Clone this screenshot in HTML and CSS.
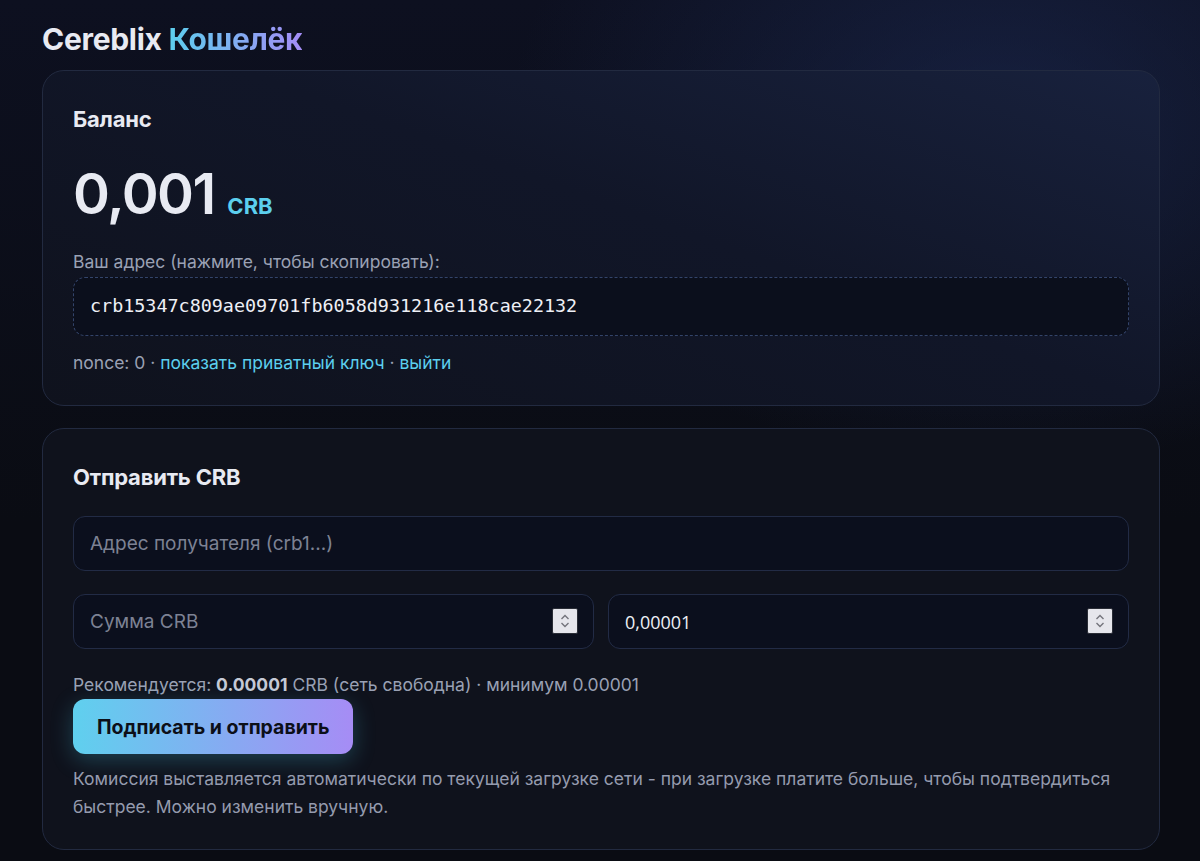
FILE: index.html
```html
<!DOCTYPE html>
<html lang="ru">
<head>
  <meta charset="UTF-8">
  <meta name="viewport" content="width=device-width, initial-scale=1">
  <title>Cereblix Кошелёк</title>
  <link rel="stylesheet" href="styles.css">
</head>
<body>

<main class="wrap">
  <h1 class="logo">Cereblix <span class="grad">Кошелёк</span></h1>

  <!-- Balance -->
  <section class="card card-balance">
    <h2>Баланс</h2>
    <div class="balance">0,001 <span class="unit">CRB</span></div>
    <div class="label">Ваш адрес (нажмите, чтобы скопировать):</div>
    <div class="address">crb15347c809ae09701fb6058d931216e118cae22132</div>
    <div class="meta">nonce: 0 · <a href="#">показать приватный ключ</a> · <a href="#">выйти</a></div>
  </section>

  <!-- Send -->
  <section class="card card-send">
    <h2>Отправить CRB</h2>
    <form class="send" onsubmit="return false;">
      <input type="text" placeholder="Адрес получателя (crb1...)">
      <div class="row">
        <label class="num">
          <input type="text" inputmode="decimal" placeholder="Сумма CRB">
          <span class="spin"><svg width="12" height="18" viewBox="0 0 12 18"><path d="M2.5 7 L6 3.5 L9.5 7 M2.5 11 L6 14.5 L9.5 11" fill="none" stroke="#74747c" stroke-width="1.4"/></svg></span>
        </label>
        <label class="num">
          <input type="text" inputmode="decimal" class="fee" value="0,00001">
          <span class="spin"><svg width="12" height="18" viewBox="0 0 12 18"><path d="M2.5 7 L6 3.5 L9.5 7 M2.5 11 L6 14.5 L9.5 11" fill="none" stroke="#74747c" stroke-width="1.4"/></svg></span>
        </label>
      </div>
      <p class="hint">Рекомендуется: <b>0.00001</b> CRB (сеть свободна) · минимум 0.00001</p>
      <button type="submit">Подписать и отправить</button>
      <p class="note">Комиссия выставляется автоматически по текущей загрузке сети - при загрузке платите больше, чтобы подтвердиться быстрее. Можно изменить вручную.</p>
    </form>
  </section>
</main>

</body>
</html>
```

FILE: styles.css
```css
html { background: #0a0c13; }
body {
  margin: 0;
  min-height: 861px;
  font-family: Inter, "Noto Sans", sans-serif;
  color: #e8eaf2;
  background:
    radial-gradient(ellipse 700px 500px at 1000px 120px, rgba(30, 45, 90, 0.55), transparent 70%),
    linear-gradient(180deg, #0d1020 0%, #0a0c13 60%);
}
.wrap { width: 1118px; margin: 0 auto 0 42px; padding-top: 21px; }
.logo { margin: 0 0 13px; font-size: 30px; font-weight: 700; letter-spacing: -0.3px; line-height: 36px; }
.grad {
  background: linear-gradient(90deg, #5ccfee, #a48cf6);
  -webkit-background-clip: text; background-clip: text; color: transparent;
}

.card {
  border: 1px solid #222a40;
  border-radius: 22px;
  padding: 34px 30px 32px;
  margin-bottom: 22px;
  background: #0f121c;
}
.card-balance {
  background: linear-gradient(200deg, #18213d 0%, #111628 45%, #0f121d 100%);
  padding-bottom: 31px;
}
.card-send { padding-bottom: 28px; }
.card h2 { margin: 0; font-size: 22px; font-weight: 700; line-height: 28px; letter-spacing: -0.2px; }

.balance { margin-top: 29px; font-size: 56px; font-weight: 600; line-height: 64px; letter-spacing: -1.5px; }
.unit { font-size: 22px; font-weight: 700; color: #5ccfee; letter-spacing: 0; }
.label { margin-top: 13px; font-size: 17.5px; color: #9aa1b4; line-height: 22px; }
.address {
  margin-top: 4px;
  padding: 17px 16px 18px;
  border: 1px dashed #33446a;
  border-radius: 12px;
  background: #0b0f1c;
  font-family: "DejaVu Sans Mono", "Liberation Mono", monospace;
  font-size: 18.4px; line-height: 22px; color: #eef0f6;
}
.meta { margin-top: 16px; font-size: 17.5px; color: #9aa1b4; line-height: 22px; }
.meta a { color: #5ccfee; text-decoration: none; }

.send { margin-top: 25px; display: flex; flex-direction: column; align-items: flex-start; }
.send input {
  box-sizing: border-box; width: 100%; height: 55px;
  padding: 0 16px;
  border: 1px solid #222b45; border-radius: 12px;
  background: #0b0f1d; color: #eef0f6;
  font-family: Inter, "Noto Sans", sans-serif; font-size: 19px;
  outline: none;
}
.send input::placeholder { color: #7d8294; }
.send .fee { font-family: "Open Sans", sans-serif; font-size: 18px; }
.row { display: flex; gap: 14px; width: 100%; margin-top: 23px; }
.num { position: relative; flex: 1; display: block; }
.spin {
  position: absolute; right: 16px; top: 14px;
  width: 26px; height: 26px; box-sizing: border-box;
  border: 1px solid #2a2d36; border-radius: 2px;
  background: #e6e6ec;
  display: flex; align-items: center; justify-content: center;
}
.hint { margin: 25px 0 0; font-size: 17.5px; line-height: 22px; color: #9aa1b4; }
.hint b { color: #c6cad6; }
button {
  margin-top: 3px;
  height: 55px; padding: 0 24px;
  border: none; border-radius: 12px;
  background: linear-gradient(90deg, #5fd0ee, #a68cf5);
  color: #0c0f18;
  font-family: Inter, "Noto Sans", sans-serif; font-size: 19.5px; font-weight: 700;
  box-shadow: 0 6px 22px rgba(70, 190, 220, 0.28);
  cursor: pointer;
}
.note { margin: 11px 0 0; font-size: 17.5px; line-height: 28px; color: #959bae; }
```
